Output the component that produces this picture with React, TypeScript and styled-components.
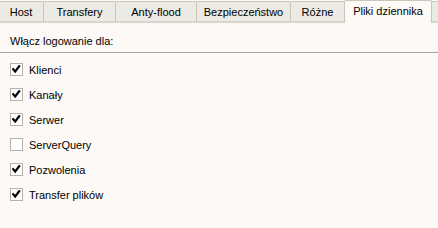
import React from "react";
import styled, { createGlobalStyle } from "styled-components";

const Global = createGlobalStyle`
  html, body { margin: 0; padding: 0; background: #fcf9f6; }
  body { font-family: Tahoma, "Liberation Sans", "DejaVu Sans", sans-serif; font-size: 11px; color: #000; }
`;

const Window = styled.div`
  width: 438px;
  height: 228px;
  background: #fcf9f6;
  overflow: hidden;
`;

const TabBar = styled.div`
  display: flex;
  align-items: flex-end;
  height: 23px;
  border-bottom: 1px solid #d8d5cc;
  box-sizing: border-box;
`;

const Tab = styled.div<{ $w: number; $active?: boolean; $first?: boolean }>`
  width: ${(p) => p.$w}px;
  flex: none;
  box-sizing: border-box;
  height: ${(p) => (p.$active ? 23 : 21)}px;
  margin-bottom: ${(p) => (p.$active ? -1 : 0)}px;
  display: flex;
  align-items: center;
  justify-content: center;
  padding-bottom: ${(p) => (p.$active ? 2 : 0)}px;
  background: ${(p) => (p.$active ? "#fcf9f6" : "#ebeae5")};
  border: 1px solid #c9c7ba;
  border-bottom: ${(p) => (p.$active ? "none" : "1px solid #d8d5cc")};
  border-left: ${(p) => (p.$first ? "none" : "1px solid #c9c7ba")};
  border-radius: 2px 2px 0 0;
  margin-left: -1px;
  white-space: nowrap;
  position: relative;
  z-index: ${(p) => (p.$active ? 1 : 0)};
`;

const Content = styled.div`
  padding: 8px 0 0 0;
`;

const Heading = styled.div`
  padding: 3px 10px 0;
  height: 18px;
  line-height: 14px;
  border-bottom: 1px solid #a09f9a;
  box-shadow: 0 1px 0 #ffffff;
`;

const List = styled.div`
  display: flex;
  flex-direction: column;
  gap: 12px;
  padding: 10px 10px 0;
`;

const Row = styled.label`
  display: flex;
  align-items: center;
  gap: 6px;
  height: 13px;
`;

const Box = styled.span`
  width: 13px;
  height: 13px;
  box-sizing: border-box;
  border: 1px solid #b4b2aa;
  background: #fff;
  display: flex;
  align-items: center;
  justify-content: center;
  flex: none;
`;

const Label = styled.span`
  line-height: 13px;
  padding-top: 1px;
`;

const tabs = [
  { t: "Host", w: 45 },
  { t: "Transfery", w: 73 },
  { t: "Anty-flood", w: 82 },
  { t: "Bezpieczeństwo", w: 95 },
  { t: "Różne", w: 55 },
  { t: "Pliki dziennika", w: 88, active: true },
  { t: "", w: 10 },
];

const items = [
  { t: "Klienci", c: true },
  { t: "Kanały", c: true },
  { t: "Serwer", c: true },
  { t: "ServerQuery", c: false },
  { t: "Pozwolenia", c: true },
  { t: "Transfer plików", c: true },
];

const Check = () => (
  <svg width="9" height="9" viewBox="0 0 9 9">
    <path d="M1.2 4.2 L3.2 6.5 L7.2 1.2" stroke="#000" strokeWidth="2.2" fill="none" strokeLinecap="square" />
  </svg>
);

export default function App() {
  return (
    <Window>
      <Global />
      <TabBar>
        {tabs.map((x, i) => (
          <Tab key={i} $w={x.w} $active={x.active} $first={i === 0}>
            {x.t}
          </Tab>
        ))}
      </TabBar>
      <Content>
        <Heading>Włącz logowanie dla:</Heading>
        <List>
          {items.map((x) => (
            <Row key={x.t}>
              <Box>{x.c && <Check />}</Box>
              <Label>{x.t}</Label>
            </Row>
          ))}
        </List>
      </Content>
    </Window>
  );
}
